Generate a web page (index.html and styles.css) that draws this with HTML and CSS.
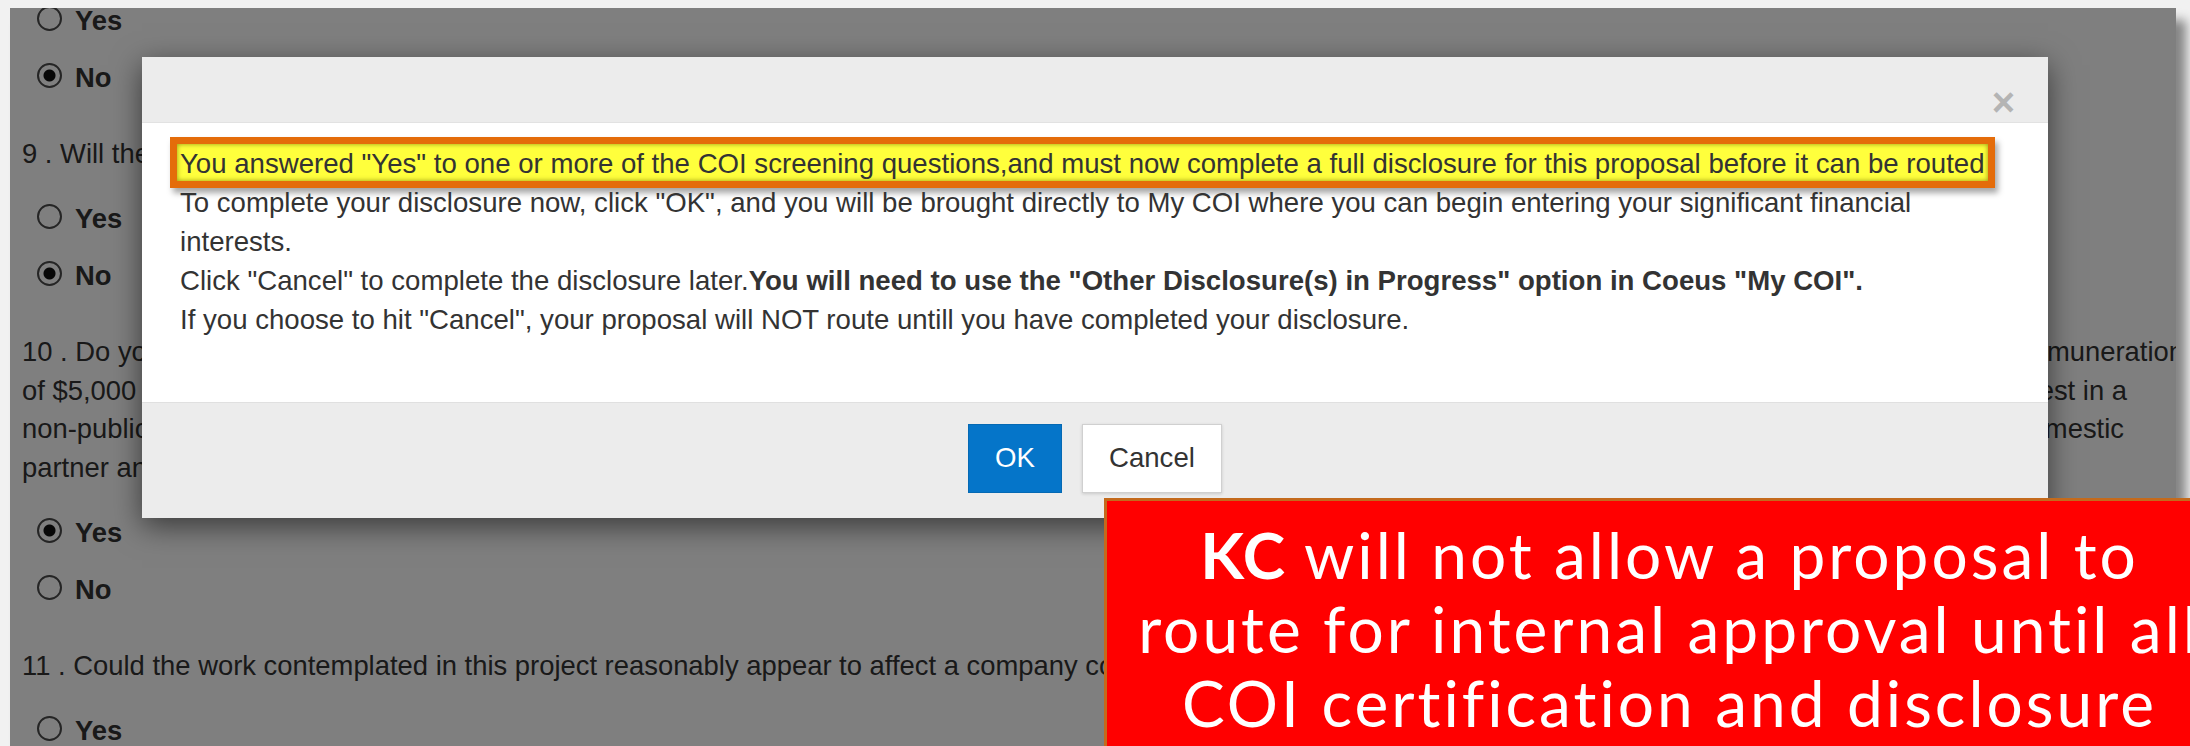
FILE: index.html
```html
<!DOCTYPE html>
<html lang="en">
<head>
<meta charset="utf-8">
<title>COI Screening Questions</title>
<link rel="stylesheet" href="styles.css">
</head>
<body>
<div class="stage">
  <div class="slide">
    <div class="page">
      <div class="options first">
        <div class="opt"><span class="radio"></span>Yes</div>
        <div class="opt"><span class="radio on"></span>No</div>
      </div>

      <div class="question">9 . Will the proposed research involve any company or entity in which you hold a financial interest?</div>
      <div class="options">
        <div class="opt"><span class="radio"></span>Yes</div>
        <div class="opt"><span class="radio on"></span>No</div>
      </div>

      <div class="question">
        <div class="qline l1"><span>10 . Do you, your spouse or domestic partner, or your dependent children receive</span><span>salary, consulting fees, honoraria, royalties, or other remuneration</span></div>
        <div class="qline l2"><span>of $5,000 or more in the past twelve months from an entity,</span><span>or do you hold any equity interest in a</span></div>
        <div class="qline l3"><span>non-public company that could be affected by this research? Include your spouse or</span><span>domestic</span></div>
        <div class="qline"><span>partner and dependent children.</span></div>
      </div>
      <div class="options">
        <div class="opt"><span class="radio on"></span>Yes</div>
        <div class="opt"><span class="radio"></span>No</div>
      </div>

      <div class="question">11 . Could the work contemplated in this project reasonably appear to affect a company connected to your significant financial interests?</div>
      <div class="options">
        <div class="opt"><span class="radio"></span>Yes</div>
        <div class="opt"><span class="radio"></span>No</div>
      </div>
    </div>

    <div class="backdrop"></div>

    <div class="modal" role="dialog">
      <div class="modal-header">
        <span class="close">&times;</span>
      </div>
      <div class="modal-body">
        <p class="msg"><span class="mark">You answered "Yes" to one or more of the COI screening questions,and must now complete a full disclosure for this proposal before it can be routed</span></p>
        <p class="msg">To complete your disclosure now, click "OK", and you will be brought directly to My COI where you can begin entering your significant financial interests.</p>
        <p class="msg">Click "Cancel" to complete the disclosure later.<strong>You will need to use the "Other Disclosure(s) in Progress" option in Coeus "My COI".</strong></p>
        <p class="msg">If you choose to hit "Cancel", your proposal will NOT route untill you have completed your disclosure.</p>
      </div>
      <div class="modal-footer">
        <button class="btn btn-primary">OK</button>
        <button class="btn btn-default">Cancel</button>
      </div>
    </div>
  </div>

  <div class="callout">
    <div class="callout-line"><b>KC</b> will not allow a proposal to</div>
    <div class="callout-line">route for internal approval until all</div>
    <div class="callout-line">COI certification and disclosure</div>
  </div>
</div>
</body>
</html>
```

FILE: styles.css
```css
html, body {
  margin: 0;
  padding: 0;
  background: #f1f1f1;
}

.stage {
  position: relative;
  width: 2190px;
  height: 746px;
  overflow: hidden;
  background: #f1f1f1;
}

/* the page sheet with its drop shadow */
.slide {
  position: relative;
  margin: 8px 0 0 10px;
  width: 2166px;
  height: 738px;
  overflow: hidden;
  box-shadow: 10px 12px 10px rgba(0, 0, 0, 0.45);
}

.page {
  display: flow-root;
  height: 100%;
  box-sizing: border-box;
  padding-left: 12px;
  background: #ffffff;
  font-family: "Liberation Sans", Arial, sans-serif;
  font-size: 27.4px;
  line-height: 38.4px;
  color: #333333;
}

.options {
  margin-top: 17px;
}

.options.first {
  margin-top: -16px;
}

.question {
  margin-top: 29px;
}

.opt {
  display: flex;
  align-items: center;
  gap: 13px;
  height: 57px;
  line-height: 57px;
  margin-left: 15px;
  font-weight: bold;
}

.radio {
  width: 25px;
  height: 25px;
  margin-bottom: 5px;
  box-sizing: border-box;
  border: 2px solid #4a4a4a;
  border-radius: 50%;
  background: #ffffff;
}

.radio.on {
  background: radial-gradient(circle, #111111 0 5.5px, #ffffff 6.5px);
}

.qline {
  display: flex;
  justify-content: space-between;
  white-space: nowrap;
}

.qline.l1 { margin-right: -8px; }
.qline.l2 { margin-right: 49px; }
.qline.l3 { margin-right: 52px; }

.backdrop {
  position: absolute;
  inset: 0;
  background: rgba(0, 0, 0, 0.5);
}

/* dialog */
.modal {
  position: absolute;
  left: 132px;
  top: 49px;
  width: 1906px;
  height: 461px;
  display: flex;
  flex-direction: column;
  background: #ffffff;
  box-shadow: 0 8px 28px rgba(0, 0, 0, 0.55);
  font-family: "Liberation Sans", Arial, sans-serif;
  color: #333333;
}

.modal-header {
  height: 66px;
  box-sizing: border-box;
  display: flex;
  justify-content: flex-end;
  align-items: flex-start;
  padding: 25px 33px 0;
  background: #ececec;
  border-bottom: 1px solid #e2e2e2;
}

.close {
  font-size: 40px;
  line-height: 40px;
  font-weight: bold;
  color: #b4b4b4;
}

.modal-body {
  flex: 1;
  padding: 21px 38px 0;
  font-size: 27.6px;
  line-height: 39px;
}

.msg {
  margin: 0;
}

.mark {
  margin-left: -10px;
  padding: 4px 3px 2px;
  background: #ffff3c;
  border: 7px solid #e46c0a;
  box-shadow: inset 0 0 5px rgba(110, 110, 0, 0.75), 3px 5px 6px rgba(0, 0, 0, 0.35);
}

.modal-footer {
  height: 116px;
  box-sizing: border-box;
  display: flex;
  justify-content: center;
  align-items: center;
  gap: 20px;
  padding-bottom: 5px;
  background: #ececec;
  border-top: 1px solid #e0e0e0;
}

.btn {
  height: 69px;
  padding: 0 26px;
  box-sizing: border-box;
  border: 1px solid;
  border-radius: 0;
  font-family: "Liberation Sans", Arial, sans-serif;
  font-size: 27.6px;
}

.btn-primary {
  background: #0575c9;
  border-color: #0569b3;
  color: #ffffff;
}

.btn-default {
  background: #ffffff;
  border-color: #d0d0d0;
  color: #333333;
  box-shadow: 0 1px 3px rgba(0, 0, 0, 0.15);
}

/* red note laid over the screen */
.callout {
  position: absolute;
  left: 1104px;
  top: 498px;
  width: 1128px;
  height: 260px;
  box-sizing: border-box;
  padding-top: 17px;
  background: #ff0000;
  border-top: 3px solid #c46a1c;
  border-left: 3px solid #c46a1c;
  color: #ffffff;
  text-align: center;
  font-family: Lato, "Open Sans", sans-serif;
  font-size: 64px;
  line-height: 74px;
  letter-spacing: 3px;
}

.callout-line {
  white-space: nowrap;
}

.callout-line b {
  font-weight: bold;
  letter-spacing: 1px;
}
```
